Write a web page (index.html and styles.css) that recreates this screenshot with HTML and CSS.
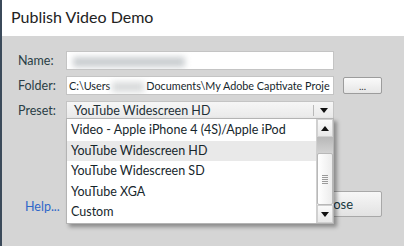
FILE: index.html
```html
<!DOCTYPE html>
<html lang="en">
  <head>
    <meta charset="UTF-8">
    <link rel="stylesheet" href="styles.css">
    <title>Publish Video Demo</title>
  </head>
  <body>
    <div class="window">
      <div class="titlebar">Publish Video Demo</div>
      <div class="content">
        <div class="form">
          <label class="label">Name:</label>
          <div class="field"><span class="smudge name-smudge"></span></div>
          <div></div>

          <label class="label">Folder:</label>
          <div class="field">C:\Users<span class="smudge folder-smudge"></span>Documents\My Adobe Captivate Proje</div>
          <button class="browse">...</button>

          <label class="label">Preset:</label>
          <div class="select">
            <span class="select-text">YouTube Widescreen HD</span>
            <span class="select-arrow"><span class="tri-down"></span></span>
          </div>
          <div></div>
        </div>
        <div class="footer">
          <a class="help" href="#">Help...</a>
          <button class="close">Close</button>
        </div>
      </div>

      <div class="dropdown">
        <ul class="options">
          <li>Video - Apple iPhone 4 (4S)/Apple iPod</li>
          <li class="selected">YouTube Widescreen HD</li>
          <li>YouTube Widescreen SD</li>
          <li>YouTube XGA</li>
          <li>Custom</li>
        </ul>
        <div class="scrollbar">
          <div class="scroll-btn"><span class="tri-up"></span></div>
          <div class="track">
            <div class="thumb"><span class="grip"></span></div>
          </div>
          <div class="scroll-btn"><span class="tri-down"></span></div>
        </div>
      </div>
    </div>
  </body>
</html>
```

FILE: styles.css
```css
body {
  margin: 0;
  font-family: Lato, "Noto Sans", sans-serif;
  font-size: 12.5px;
  color: #1e2f36;
  background-color: #d5d5d5;
}

.window {
  position: relative;
  width: 404px;
  height: 246px;
  overflow: hidden;
  border-left: 2px solid #3b4a5a;
  box-sizing: border-box;
}

.titlebar {
  height: 36px;
  margin-left: -2px;
  padding-left: 11px;
  background-color: #ffffff;
  font-size: 16px;
  line-height: 34px;
  color: #222222;
}

.content {
  padding: 15px 20px 0 14px;
}

.form {
  display: grid;
  grid-template-columns: 41px 268px 39px;
  column-gap: 9px;
  row-gap: 6px;
  align-items: center;
}

.label {
  padding-left: 2px;
  color: #2a3e46;
}

.field {
  height: 17px;
  line-height: 17px;
  padding-left: 2px;
  font-size: 10.8px;
  background-color: #ffffff;
  border: 1px solid #c4c4c4;
  white-space: nowrap;
  overflow: hidden;
  color: #16262c;
}

.smudge {
  display: inline-block;
  height: 10px;
  vertical-align: middle;
  background-color: #c9cdd0;
  filter: blur(3px);
}

.name-smudge {
  width: 112px;
  margin-left: 4px;
}

.folder-smudge {
  width: 32px;
  margin: 0 2px;
  background-color: #d8dadb;
}

.browse {
  height: 17px;
  padding: 0;
  font-family: inherit;
  font-size: 10px;
  line-height: 8px;
  color: #333;
  background: linear-gradient(#fafafa, #e6e6e6);
  border: 1px solid #9c9c9c;
  border-radius: 2px;
}

.select {
  display: flex;
  height: 17px;
  line-height: 17px;
  background: linear-gradient(#f6f6f6, #e9e9e9);
  border: 1px solid #c4c4c4;
  border-bottom: none;
}

.select-text {
  flex: 1;
  padding-left: 7px;
}

.select-arrow {
  display: flex;
  align-items: center;
  justify-content: center;
  width: 19px;
  margin: 3px 0;
  border-left: 1px solid #b9b9b9;
}

.tri-down,
.tri-up {
  width: 0;
  height: 0;
  border-left: 4px solid transparent;
  border-right: 4px solid transparent;
}

.tri-down {
  border-top: 5px solid #111;
}

.tri-up {
  border-bottom: 5px solid #111;
}

.footer {
  display: flex;
  justify-content: space-between;
  align-items: center;
  margin-top: 72px;
  padding-left: 9px;
}

.help {
  color: #2e67c9;
  text-decoration: none;
  margin-top: 4px;
}

.close {
  width: 76px;
  height: 26px;
  margin-right: 2px;
  font-family: inherit;
  font-size: 13px;
  color: #16383e;
  background: linear-gradient(#f7f7f7, #e2e2e2);
  border: 1px solid #a8a8a8;
  border-radius: 2px;
  text-align: right;
  padding-right: 28px;
}

.dropdown {
  position: absolute;
  left: 64px;
  top: 118px;
  width: 268px;
  height: 106px;
  display: flex;
  background-color: #ffffff;
  border: 1px solid #b4b4b4;
  box-sizing: border-box;
  box-shadow: 3px 3px 4px rgba(0, 0, 0, 0.35);
}

.options {
  flex: 1;
  list-style: none;
  margin: 0;
  padding: 1px 0 0;
}

.options li {
  height: 20.6px;
  line-height: 20px;
  padding-left: 4px;
  color: #16262c;
}

.options .selected {
  background-color: #e9e9e9;
}

.scrollbar {
  width: 16px;
  display: flex;
  flex-direction: column;
  border-left: 1px solid #d0d0d0;
}

.scroll-btn {
  height: 16px;
  display: flex;
  align-items: center;
  justify-content: center;
  background: linear-gradient(#fafafa, #e8e8e8);
  border: 1px solid #d0d0d0;
}

.track {
  flex: 1;
  display: flex;
  flex-direction: column;
  justify-content: flex-end;
  background: linear-gradient(#b8b8b8, #e4e4e4 40%, #f0f0f0);
}

.thumb {
  height: 50px;
  display: flex;
  align-items: center;
  justify-content: center;
  background: linear-gradient(90deg, #ffffff, #ececec);
  border: 1px solid #b8b8b8;
  border-radius: 2px;
}

.grip {
  width: 6px;
  height: 9px;
  background: repeating-linear-gradient(#9a9a9a 0 1px, transparent 1px 2px);
}
```
